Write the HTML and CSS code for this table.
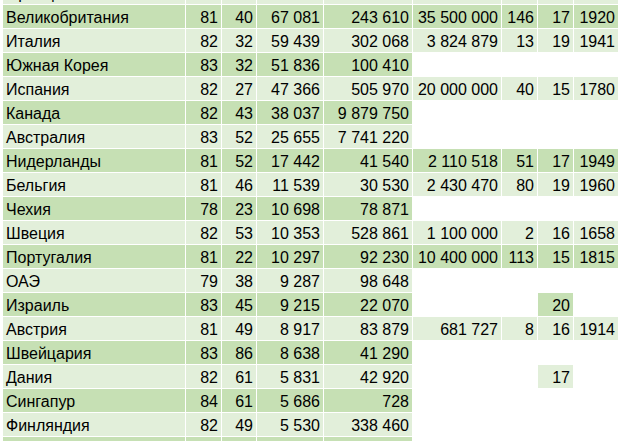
FILE: index.html
```html
<!DOCTYPE html>
<html lang="ru">
<head>
<meta charset="utf-8">
<title>Таблица</title>
<link rel="stylesheet" href="styles.css">
</head>
<body>
<div class="sheet">
  <div class="row lt">
    <div class="c ca">Франция</div><div class="c cb n">82</div><div class="c cc n">37</div><div class="c cd n">67&nbsp;413</div><div class="c ce n">643&nbsp;801</div>
    <div class="c cf n">38&nbsp;000&nbsp;000</div><div class="c cg n">45</div><div class="c ch n">18</div><div class="c ci n">1793</div>
  </div>
  <div class="row dk">
    <div class="c ca">Великобритания</div><div class="c cb n">81</div><div class="c cc n">40</div><div class="c cd n">67&nbsp;081</div><div class="c ce n">243&nbsp;610</div>
    <div class="c cf n">35&nbsp;500&nbsp;000</div><div class="c cg n">146</div><div class="c ch n">17</div><div class="c ci n">1920</div>
  </div>
  <div class="row lt">
    <div class="c ca">Италия</div><div class="c cb n">82</div><div class="c cc n">32</div><div class="c cd n">59&nbsp;439</div><div class="c ce n">302&nbsp;068</div>
    <div class="c cf n">3&nbsp;824&nbsp;879</div><div class="c cg n">13</div><div class="c ch n">19</div><div class="c ci n">1941</div>
  </div>
  <div class="row dk">
    <div class="c ca">Южная Корея</div><div class="c cb n">83</div><div class="c cc n">32</div><div class="c cd n">51&nbsp;836</div><div class="c ce n">100&nbsp;410</div>
    <div class="c cf e"></div><div class="c cg e"></div><div class="c ch e"></div><div class="c ci e"></div>
  </div>
  <div class="row lt">
    <div class="c ca">Испания</div><div class="c cb n">82</div><div class="c cc n">27</div><div class="c cd n">47&nbsp;366</div><div class="c ce n">505&nbsp;970</div>
    <div class="c cf n">20&nbsp;000&nbsp;000</div><div class="c cg n">40</div><div class="c ch n">15</div><div class="c ci n">1780</div>
  </div>
  <div class="row dk">
    <div class="c ca">Канада</div><div class="c cb n">82</div><div class="c cc n">43</div><div class="c cd n">38&nbsp;037</div><div class="c ce n">9&nbsp;879&nbsp;750</div>
    <div class="c cf e"></div><div class="c cg e"></div><div class="c ch e"></div><div class="c ci e"></div>
  </div>
  <div class="row lt">
    <div class="c ca">Австралия</div><div class="c cb n">83</div><div class="c cc n">52</div><div class="c cd n">25&nbsp;655</div><div class="c ce n">7&nbsp;741&nbsp;220</div>
    <div class="c cf e"></div><div class="c cg e"></div><div class="c ch e"></div><div class="c ci e"></div>
  </div>
  <div class="row dk">
    <div class="c ca">Нидерланды</div><div class="c cb n">81</div><div class="c cc n">52</div><div class="c cd n">17&nbsp;442</div><div class="c ce n">41&nbsp;540</div>
    <div class="c cf n">2&nbsp;110&nbsp;518</div><div class="c cg n">51</div><div class="c ch n">17</div><div class="c ci n">1949</div>
  </div>
  <div class="row lt">
    <div class="c ca">Бельгия</div><div class="c cb n">81</div><div class="c cc n">46</div><div class="c cd n">11&nbsp;539</div><div class="c ce n">30&nbsp;530</div>
    <div class="c cf n">2&nbsp;430&nbsp;470</div><div class="c cg n">80</div><div class="c ch n">19</div><div class="c ci n">1960</div>
  </div>
  <div class="row dk">
    <div class="c ca">Чехия</div><div class="c cb n">78</div><div class="c cc n">23</div><div class="c cd n">10&nbsp;698</div><div class="c ce n">78&nbsp;871</div>
    <div class="c cf e"></div><div class="c cg e"></div><div class="c ch e"></div><div class="c ci e"></div>
  </div>
  <div class="row lt">
    <div class="c ca">Швеция</div><div class="c cb n">82</div><div class="c cc n">53</div><div class="c cd n">10&nbsp;353</div><div class="c ce n">528&nbsp;861</div>
    <div class="c cf n">1&nbsp;100&nbsp;000</div><div class="c cg n">2</div><div class="c ch n">16</div><div class="c ci n">1658</div>
  </div>
  <div class="row dk">
    <div class="c ca">Португалия</div><div class="c cb n">81</div><div class="c cc n">22</div><div class="c cd n">10&nbsp;297</div><div class="c ce n">92&nbsp;230</div>
    <div class="c cf n">10&nbsp;400&nbsp;000</div><div class="c cg n">113</div><div class="c ch n">15</div><div class="c ci n">1815</div>
  </div>
  <div class="row lt">
    <div class="c ca">ОАЭ</div><div class="c cb n">79</div><div class="c cc n">38</div><div class="c cd n">9&nbsp;287</div><div class="c ce n">98&nbsp;648</div>
    <div class="c cf e"></div><div class="c cg e"></div><div class="c ch e"></div><div class="c ci e"></div>
  </div>
  <div class="row dk">
    <div class="c ca">Израиль</div><div class="c cb n">83</div><div class="c cc n">45</div><div class="c cd n">9&nbsp;215</div><div class="c ce n">22&nbsp;070</div>
    <div class="c cf e"></div><div class="c cg e"></div><div class="c ch n">20</div><div class="c ci e"></div>
  </div>
  <div class="row lt">
    <div class="c ca">Австрия</div><div class="c cb n">81</div><div class="c cc n">49</div><div class="c cd n">8&nbsp;917</div><div class="c ce n">83&nbsp;879</div>
    <div class="c cf n">681&nbsp;727</div><div class="c cg n">8</div><div class="c ch n">16</div><div class="c ci n">1914</div>
  </div>
  <div class="row dk">
    <div class="c ca">Швейцария</div><div class="c cb n">83</div><div class="c cc n">86</div><div class="c cd n">8&nbsp;638</div><div class="c ce n">41&nbsp;290</div>
    <div class="c cf e"></div><div class="c cg e"></div><div class="c ch e"></div><div class="c ci e"></div>
  </div>
  <div class="row lt">
    <div class="c ca">Дания</div><div class="c cb n">82</div><div class="c cc n">61</div><div class="c cd n">5&nbsp;831</div><div class="c ce n">42&nbsp;920</div>
    <div class="c cf e"></div><div class="c cg e"></div><div class="c ch n">17</div><div class="c ci e"></div>
  </div>
  <div class="row dk">
    <div class="c ca">Сингапур</div><div class="c cb n">84</div><div class="c cc n">61</div><div class="c cd n">5&nbsp;686</div><div class="c ce n">728</div>
    <div class="c cf e"></div><div class="c cg e"></div><div class="c ch e"></div><div class="c ci e"></div>
  </div>
  <div class="row lt">
    <div class="c ca">Финляндия</div><div class="c cb n">82</div><div class="c cc n">49</div><div class="c cd n">5&nbsp;530</div><div class="c ce n">338&nbsp;460</div>
    <div class="c cf e"></div><div class="c cg e"></div><div class="c ch e"></div><div class="c ci e"></div>
  </div>
  <div class="row dk">
    <div class="c ca">Норвегия</div><div class="c cb n">83</div><div class="c cc n">75</div><div class="c cd n">5&nbsp;379</div><div class="c ce n">385&nbsp;207</div>
    <div class="c cf e"></div><div class="c cg e"></div><div class="c ch e"></div><div class="c ci e"></div>
  </div>
</div>
</body>
</html>
```

FILE: styles.css
```css
html, body {
  margin: 0;
  padding: 0;
  background: #ffffff;
  overflow: hidden;
}

.sheet {
  display: flex;
  flex-direction: column;
  gap: 1px;
  margin-top: -19px;
  padding-left: 3px;
  font-family: "Liberation Sans", Arial, sans-serif;
  font-size: 16px;
  color: #000000;
}

.row {
  display: flex;
  gap: 1px;
  height: 23px;
}

.c {
  box-sizing: border-box;
  flex: none;
  height: 23px;
  padding: 3px 3px 0 3px;
  line-height: 20px;
  white-space: nowrap;
  overflow: hidden;
}

.n { text-align: right; }

.ca { width: 182px; }
.cb { width: 35px; }
.cc { width: 34px; }
.cd { width: 66px; }
.ce { width: 88px; }
.cf { width: 88px; }
.cg { width: 35px; }
.ch { width: 35px; }
.ci { width: 44px; }

.dk .c { background: #c6e0b4; }
.lt .c { background: #e2efda; }
.row .e { background: #ffffff; }
```
